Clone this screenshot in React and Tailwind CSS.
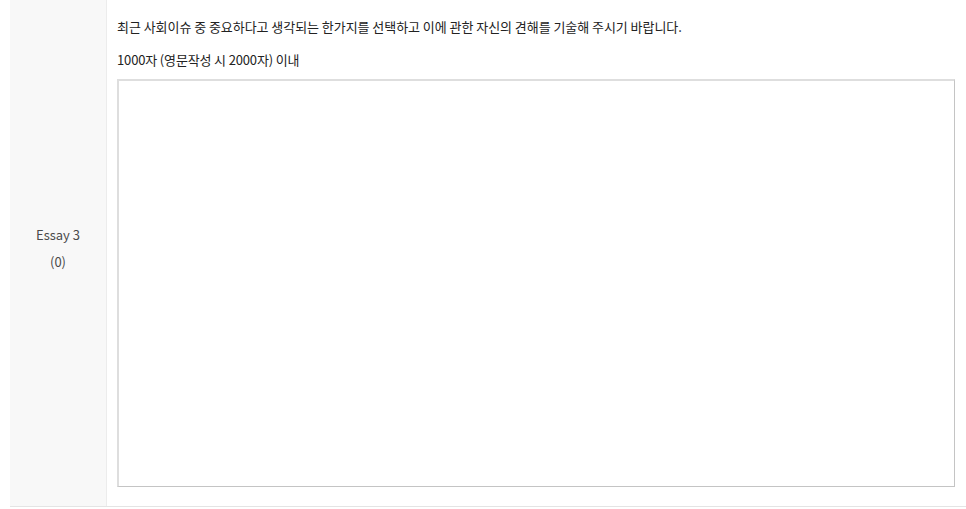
export default function App() {
  return (
    <div className="min-h-screen bg-white" style={{ fontFamily: '"Noto Sans CJK KR", "Noto Sans", sans-serif' }}>
      <div className="ml-[10px] flex border-b border-[#e4e4e4]">
        {/* 라벨 셀 */}
        <div className="w-[97px] shrink-0 bg-[#f8f8f8] border-r border-[#ececec] flex flex-col items-center justify-center gap-[8px] text-[13px] text-[#4a4a4a] pb-[10px]">
          <span className="leading-[19px]">Essay 3</span>
          <span className="leading-[19px]">(0)</span>
        </div>

        {/* 내용 셀 */}
        <div className="flex-1 pl-[10px] pr-[11px] pt-[17px] pb-[19px]">
          <p className="text-[13px] leading-[20px] text-[#222] tracking-[-0.05px]">
            최근 사회이슈 중 중요하다고 생각되는 한가지를 선택하고 이에 관한 자신의 견해를 기술해 주시기 바랍니다.
          </p>
          <p className="mt-[13px] text-[13px] leading-[20px] text-[#222] tracking-[-0.15px]">
            1000자 (영문작성 시 2000자) 이내
          </p>
          <textarea
            className="mt-[9px] block w-full h-[408px] resize-none bg-white border-t-2 border-l-2 border-r border-b border-t-[#dedede] border-l-[#dedede] border-r-[#c4c4c4] border-b-[#c4c4c4] outline-none"
          />
        </div>
      </div>
    </div>
  );
}
